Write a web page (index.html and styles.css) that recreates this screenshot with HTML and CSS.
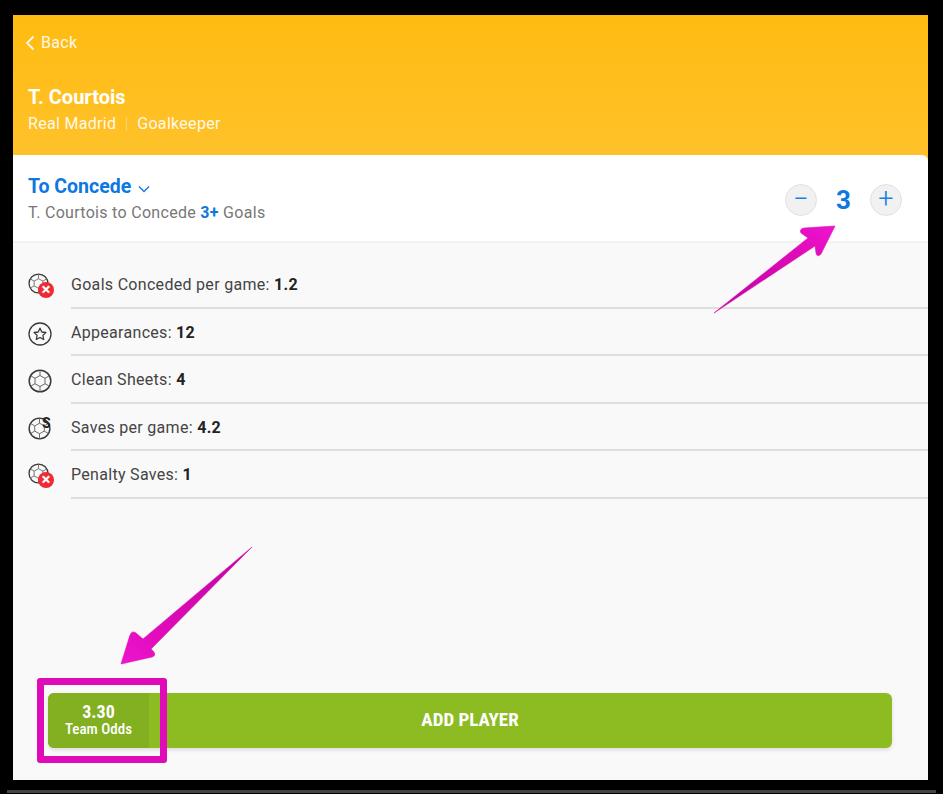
FILE: index.html
```html
<!DOCTYPE html>
<html lang="en">
<head>
    <meta charset="UTF-8">
    <meta name="viewport" content="width=device-width, initial-scale=1.0">
    <title>T. Courtois - To Concede</title>
    <link rel="stylesheet" href="styles.css">
</head>
<body>
    <svg class="defs" width="0" height="0">
        <symbol id="ball" viewBox="0 0 24 24">
            <circle cx="12" cy="12" r="10.8" fill="none" stroke="#3a3a3a" stroke-width="1.5"/>
            <path d="M12 6.500l5 2.800v5.400L12 17.500l-5-2.800V9.300zM12 6.500V1.500M17 9.300l4.300-2.500M17 14.700l4.300 2.500M7 14.700l-4.300 2.500M12 17.500v5M7 9.300L2.700 6.800" fill="none" stroke="#666" stroke-width="1"/>
        </symbol>
        <linearGradient id="pink" x1="0" y1="1" x2="1" y2="0">
            <stop offset="0" stop-color="#b808a0"/>
            <stop offset=".7" stop-color="#e00bb8"/>
            <stop offset="1" stop-color="#ee14d2"/>
        </linearGradient>
        <linearGradient id="pink2" x1="1" y1="0" x2="0" y2="1">
            <stop offset="0" stop-color="#b808a0"/>
            <stop offset=".7" stop-color="#e00bb8"/>
            <stop offset="1" stop-color="#ee14d2"/>
        </linearGradient>
    </svg>

    <div class="app">
        <header class="top">
            <a class="back">
                <svg width="10" height="16" viewBox="0 0 10 16"><path d="M8.500 1.500L2 8l6.500 6.500" fill="none" stroke="#fff" stroke-width="1.800"/></svg>
                Back
            </a>
            <h1>T. Courtois</h1>
            <p class="team"><span>Real Madrid</span><i></i><span>Goalkeeper</span></p>
        </header>

        <section class="market">
            <div>
                <h2>To Concede
                    <svg width="12" height="8" viewBox="0 0 12 8"><path d="M1 1.500l5 5 5-5" fill="none" stroke="#0c78e0" stroke-width="1.300"/></svg>
                </h2>
                <p>T. Courtois to Concede <b>3+</b> Goals</p>
            </div>
            <div class="stepper">
                <button>&minus;</button>
                <strong>3</strong>
                <button>+</button>
            </div>
        </section>

        <ul class="stats">
            <li>
                <span class="ico ico-small"><svg width="21" height="21"><use href="#ball"/></svg><em class="cross">&times;</em></span>
                <div class="row">Goals Conceded per game: <b>1.2</b></div>
            </li>
            <li>
                <span class="ico"><svg width="24" height="24" viewBox="0 0 24 24"><circle cx="12" cy="12" r="11" fill="none" stroke="#3a3a3a" stroke-width="1.300"/><path d="M12 6.200l1.800 3.800 4.100.5-3 2.900.8 4.100-3.700-2-3.700 2 .8-4.100-3-2.900 4.100-.5z" fill="none" stroke="#3a3a3a" stroke-width="1.300" stroke-linejoin="round"/></svg></span>
                <div class="row">Appearances: <b>12</b></div>
            </li>
            <li>
                <span class="ico"><svg width="24" height="24"><use href="#ball"/></svg></span>
                <div class="row">Clean Sheets: <b>4</b></div>
            </li>
            <li>
                <span class="ico"><svg width="23" height="23"><use href="#ball"/></svg><em class="save">S</em></span>
                <div class="row">Saves per game: <b>4.2</b></div>
            </li>
            <li>
                <span class="ico ico-small"><svg width="21" height="21"><use href="#ball"/></svg><em class="cross">&times;</em></span>
                <div class="row">Penalty Saves: <b>1</b></div>
            </li>
        </ul>

        <div class="cta">
            <div class="odds"><b>3.30</b><span>Team Odds</span></div>
            <div class="add">ADD PLAYER</div>
        </div>

        <div class="mark-box"></div>
        <svg class="arrow arrow-top" width="130" height="100" viewBox="710 220 130 100">
            <path d="M714 313L808 238 801 233Q799 229 804 228L835 226 821 254Q817 258 816 253L815 246z" fill="url(#pink)" stroke="#e00bb8" stroke-width=".6" stroke-linejoin="round"/>
        </svg>
        <svg class="arrow arrow-bottom" width="140" height="125" viewBox="118 544 140 125">
            <path d="M252 547L151 649 154 652Q156 656 152 657L121 664 130 635Q132 630 136 633L143 639z" fill="url(#pink2)" stroke="#e00bb8" stroke-width=".6" stroke-linejoin="round"/>
        </svg>
    </div>
    <div class="edge"></div>
</body>
</html>
```

FILE: styles.css
```css
* {
    box-sizing: border-box;
}
body {
    margin: 0;
    height: 794px;
    padding: 15px 15px 0 13px;
    background: #000;
    font-family: Roboto, "Liberation Sans", Arial, sans-serif;
    letter-spacing: .3px;
    overflow: hidden;
}
.defs {
    position: absolute;
}
.app {
    position: relative;
    height: 765px;
    display: flex;
    flex-direction: column;
    background: #f9f9f9;
}
.top {
    height: 148px;
    margin-bottom: -8px;
    padding: 18px 15px 0;
    background: linear-gradient(#ffbb10, #ffc22c);
    color: #fff;
}
.back {
    display: flex;
    align-items: center;
    gap: 6px;
    margin-left: -3px;
    font-size: 16px;
    line-height: 19px;
    opacity: .9;
}
.top h1 {
    margin: 32px 0 0;
    font-size: 20px;
    line-height: 26px;
    font-weight: 700;
    letter-spacing: 0;
}
.team {
    display: flex;
    align-items: center;
    margin: 5px 0 0;
    font-size: 16px;
    line-height: 18px;
    opacity: .9;
}
.team i {
    width: 1px;
    height: 14px;
    margin: 0 10px;
    background: #ffd76f;
}
.market {
    position: relative;
    height: 88px;
    flex-shrink: 0;
    display: flex;
    align-items: center;
    justify-content: space-between;
    padding: 0 26px 0 15px;
    background: #fff;
    border-radius: 0 6px 0 0;
    border-bottom: 2px solid #f1f1f1;
}
.market h2 {
    display: flex;
    align-items: center;
    gap: 7px;
    margin: 1px 0 0;
    font-size: 19.5px;
    line-height: 23px;
    font-weight: 700;
    letter-spacing: 0;
    color: #0c78e0;
}
.market h2 svg {
    margin-top: 5px;
}
.market p {
    margin: 6px 0 0;
    font-size: 16px;
    line-height: 18px;
    color: #777;
}
.market p b {
    color: #0c78e0;
}
.stepper {
    display: flex;
    align-items: center;
    gap: 18px;
    margin-top: 4px;
}
.stepper button {
    width: 32px;
    height: 32px;
    padding: 0 0 2px;
    border: 1px solid #e2e2e2;
    border-radius: 50%;
    background: #f1f1f1;
    color: #1b7fe0;
    font-family: inherit;
    font-size: 27px;
    font-weight: 300;
    line-height: 26px;
}
.stepper strong {
    width: 17px;
    text-align: center;
    font-size: 26px;
    font-weight: 700;
    color: #0c78e0;
}
.stats {
    list-style: none;
    margin: 0;
    padding: 18px 0 0 15px;
}
.stats li {
    display: flex;
    height: 47.6px;
}
.ico {
    position: relative;
    width: 43px;
    padding-top: 13px;
    flex-shrink: 0;
}
.ico-small {
    padding-top: 12px;
}
.ico svg {
    display: block;
}
.cross {
    position: absolute;
    left: 10px;
    top: 21px;
    width: 16px;
    height: 16px;
    border-radius: 50%;
    background: #ee2b35;
    color: #fff;
    font-style: normal;
    font-weight: 700;
    font-size: 17px;
    line-height: 15px;
    letter-spacing: 0;
    text-align: center;
}
.save {
    position: absolute;
    left: 14px;
    top: 12px;
    font-style: normal;
    font-weight: 700;
    font-size: 14px;
    line-height: 15px;
    color: #222;
}
.row {
    flex: 1;
    padding-top: 14px;
    border-bottom: 2px solid #dedede;
    font-size: 16px;
    line-height: 19px;
    color: #444;
}
.row b {
    color: #222;
}
.cta {
    position: absolute;
    left: 35px;
    right: 36px;
    top: 678px;
    height: 55px;
    display: flex;
    background: #8cbc21;
    border-radius: 6px;
    box-shadow: 0 2px 4px rgba(0, 0, 0, .12);
    color: #fff;
    overflow: hidden;
    letter-spacing: 0;
}
.odds {
    width: 101px;
    display: flex;
    flex-direction: column;
    align-items: center;
    justify-content: center;
    padding-bottom: 3px;
    background: #82b021;
}
.odds b {
    font-size: 18px;
    line-height: 19px;
    font-stretch: 75%;
}
.odds span {
    font-size: 15px;
    line-height: 16px;
    font-weight: 500;
    font-stretch: 75%;
}
.add {
    flex: 1;
    padding-right: 101px;
    text-align: center;
    font-size: 19px;
    line-height: 54px;
    font-weight: 700;
    font-stretch: 75%;
}
.mark-box {
    position: absolute;
    left: 24px;
    top: 663px;
    width: 130px;
    height: 85px;
    border: 7px solid #e00bb8;
    border-radius: 3px;
}
.arrow {
    position: absolute;
}
.arrow-top {
    left: 697px;
    top: 205px;
}
.arrow-bottom {
    left: 105px;
    top: 529px;
}
.edge {
    height: 3px;
    margin: 10px -8px 0 -6px;
    background: #444;
}
```
